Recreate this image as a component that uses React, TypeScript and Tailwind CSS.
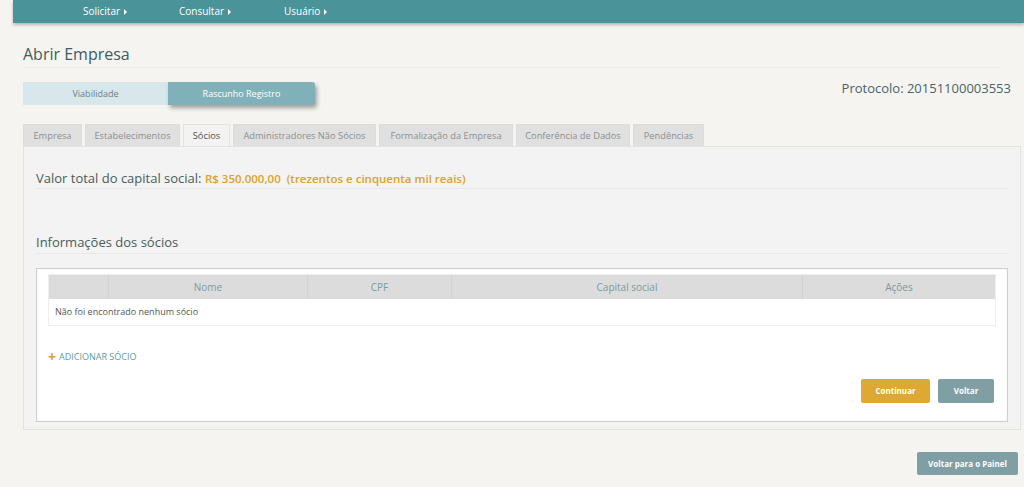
import React from 'react';

const tabs = [
  { label: 'Empresa', w: 'w-[59px]' },
  { label: 'Estabelecimentos', w: 'w-[95px]' },
  { label: 'Sócios', w: 'w-[47px]', active: true },
  { label: 'Administradores Não Sócios', w: 'w-[143px]' },
  { label: 'Formalização da Empresa', w: 'w-[134px]' },
  { label: 'Conferência de Dados', w: 'w-[114px]' },
  { label: 'Pendências', w: 'w-[71px]' },
];

const Caret = () => <span className="ml-[4px] inline-block border-y-[3px] border-l-[3px] border-y-transparent border-l-white align-middle" />;

const App: React.FC = () => {
  return (
    <div className="min-h-[487px] bg-[#f5f4f1] font-['Open_Sans',sans-serif] text-[#4b5b5c]">
      {/* barra superior */}
      <div className="ml-[13px] flex h-[23px] items-center bg-[#4a9399] pl-[70px] text-[10px] text-white shadow-[0_2px_3px_rgba(0,0,0,0.25)]">
        <span className="w-[96px]">Solicitar<Caret /></span>
        <span className="w-[105px]">Consultar<Caret /></span>
        <span>Usuário<Caret /></span>
      </div>

      <div className="px-[23px] pt-[20px]">
        <h1 className="border-b border-[#eceae6] pb-[2px] text-[16px] leading-[22px] text-[#3f5c5f]">Abrir Empresa</h1>

        <div className="mt-[14px] flex items-start justify-between">
          <div className="flex h-[23px] w-[292px] text-[9px]">
            <div className="flex w-[145px] items-center justify-center bg-[#d8e7eb] text-[#6e7f82]">Viabilidade</div>
            <div className="flex flex-1 items-center justify-center rounded-r-[3px] bg-[#80b1b8] text-white shadow-[2px_3px_4px_rgba(0,0,0,0.35)]">Rascunho Registro</div>
          </div>
          <div className="mr-[-10px] text-[13px] leading-[12px] text-[#4b6366]">Protocolo: 20151100003553</div>
        </div>

        <div className="mt-[19px] flex h-[22px] gap-[3px] text-[9.3px]">
          {tabs.map(t => (
            <div
              key={t.label}
              className={`${t.w} flex items-center justify-center border border-b-0 ${t.active ? 'border-[#e2e3e2] bg-[#f2f3f2] text-[#4a5555]' : 'border-[#dcdcdc] bg-[#e0e0e0] text-[#8c8f8f]'}`}
            >
              {t.label}
            </div>
          ))}
        </div>

        <div className="mr-[-20px] h-[284px] border border-[#e2e3e2] bg-[#f2f3f2] px-[12px] pt-[22px]">
          <div className="border-b border-[#e6e7e6] text-[13px] leading-[18px]">
            Valor total do capital social: <span className="text-[11.5px] font-semibold text-[#dba327]">R$ 350.000,00 &nbsp;(trezentos e cinquenta mil reais)</span>
          </div>

          <div className="mt-[44px] border-b border-[#e6e7e6] pb-[2px] text-[13px] leading-[18px]">Informações dos sócios</div>

          <div className="mt-[14px] h-[154px] border border-[#cfd1d0] bg-white px-[11px] pt-[5px] shadow-[inset_0_0_2px_rgba(0,0,0,0.08)]">
            <div className="border border-[#eeeeee]">
              <div className="flex h-[24px] bg-[#dcdcdc] text-[10px] text-[#7c9a9e]">
                <div className="w-[60px] border-r border-[#d2d2d2]" />
                <div className="flex w-[199px] items-center justify-center border-r border-[#d2d2d2]">Nome</div>
                <div className="flex w-[144px] items-center justify-center border-r border-[#d2d2d2]">CPF</div>
                <div className="flex w-[351px] items-center justify-center border-r border-[#d2d2d2]">Capital social</div>
                <div className="flex flex-1 items-center justify-center">Ações</div>
              </div>
              <div className="flex h-[26px] items-center px-[6px] text-[9px] text-[#555]">Não foi encontrado nenhum sócio</div>
            </div>

            <div className="mt-[24px] flex items-center text-[9px] text-[#5d9ca3]">
              <span className="mr-[3px] text-[14px] font-bold leading-none text-[#dba327]">+</span>ADICIONAR SÓCIO
            </div>

            <div className="mr-[2px] mt-[15px] flex justify-end gap-[8px] text-[8px] font-bold text-white">
              <button className="h-[24px] w-[69px] rounded-[2px] bg-[#dfa833]">Continuar</button>
              <button className="h-[24px] w-[56px] rounded-[2px] bg-[#7f9fa4]">Voltar</button>
            </div>
          </div>
        </div>

        <div className="mr-[-17px] mt-[22px] flex justify-end">
          <button className="h-[23px] w-[101px] rounded-[2px] bg-[#7f9fa4] text-[8px] font-bold text-white">Voltar para o Painel</button>
        </div>
      </div>
    </div>
  );
};

export default App;
